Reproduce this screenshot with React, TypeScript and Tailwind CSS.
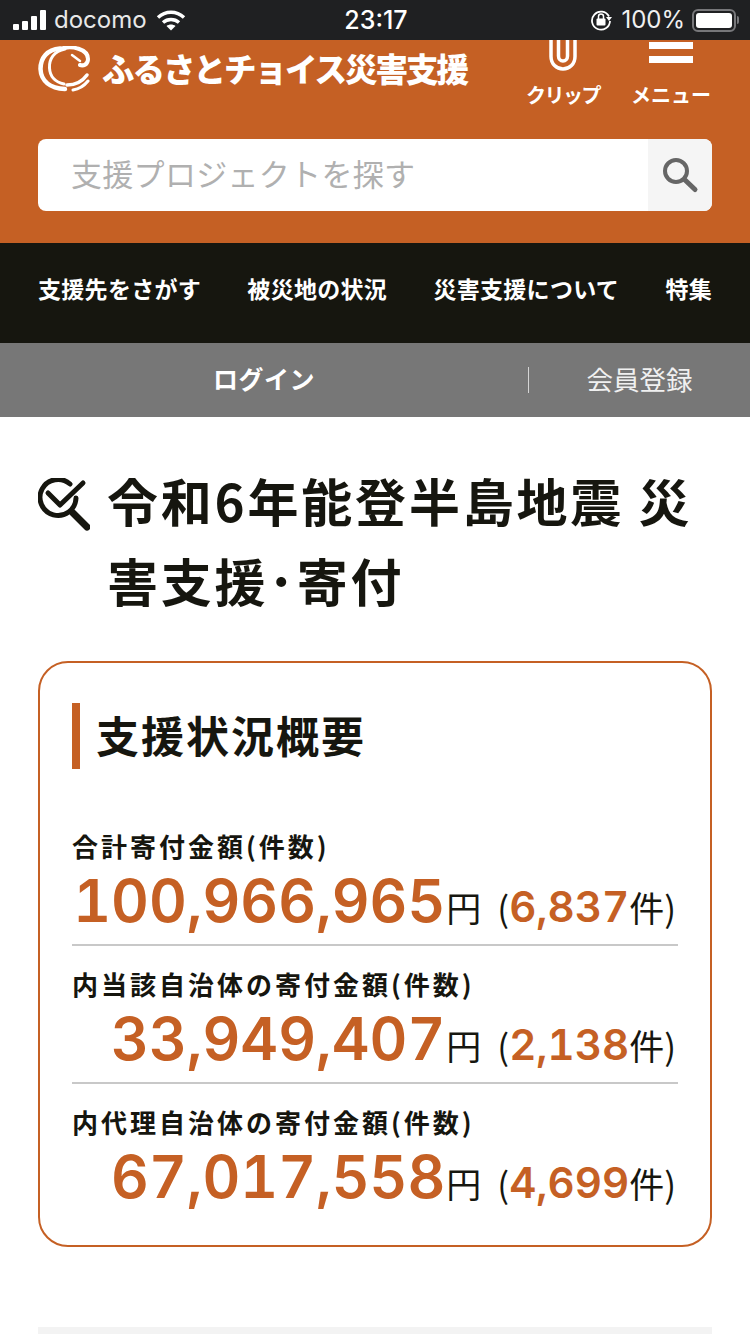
const jp = "font-['Noto_Sans_CJK_JP','Noto_Sans',sans-serif]"

const rows = [
  { label: '合計寄付金額(件数)', amount: '100,966,965', count: '6,837' },
  { label: '内当該自治体の寄付金額(件数)', amount: '33,949,407', count: '2,138' },
  { label: '内代理自治体の寄付金額(件数)', amount: '67,017,558', count: '4,699' },
]

function StatusBar() {
  return (
    <div className="flex h-10 items-center justify-between bg-[#1f2022] pl-[13px] pr-[11px] text-white font-['Inter',sans-serif]">
      <div className="flex w-[260px] items-center">
        <div className="flex items-end gap-[3px]">
          <span className="h-[6px] w-[6px] rounded-[1px] bg-white" />
          <span className="h-[9px] w-[6px] rounded-[1px] bg-white" />
          <span className="h-[14px] w-[6px] rounded-[1px] bg-white" />
          <span className="h-[20px] w-[6px] rounded-[1px] bg-white" />
        </div>
        <span className="ml-[8px] text-[24px] leading-none text-[#e8e8e8]">docomo</span>
        <svg className="ml-[9px]" width="30" height="22" viewBox="0 0 30 22" fill="none" stroke="white" strokeWidth="3.4">
          <path d="M2 8.5C9.5 1.5 20.5 1.5 28 8.5" />
          <path d="M7 13.5C11.5 9.5 18.5 9.5 23 13.5" />
          <path d="M15 21.5L10.5 17C13 15 17 15 19.5 17Z" fill="white" stroke="none" />
        </svg>
      </div>
      <span className="text-[25px] font-medium leading-none">23:17</span>
      <div className="flex w-[260px] items-center justify-end">
        <svg width="22" height="22" viewBox="0 0 22 22" fill="none">
          <path d="M19 7.5A9 9 0 1 0 20 12" stroke="white" strokeWidth="1.8" />
          <path d="M16 8h6l-3 4z" fill="white" />
          <rect x="6.5" y="9.5" width="9" height="7" rx="1" fill="white" />
          <path d="M8.5 10V7.5a2.5 2.5 0 0 1 5 0V10" stroke="white" strokeWidth="1.5" />
        </svg>
        <span className="ml-[9px] text-[24px] leading-none text-[#f0f0f0]">100%</span>
        <div className="ml-[7px] flex items-center">
          <div className="h-[23px] w-[44px] rounded-[6px] border-2 border-[#77777a] p-[2px]">
            <div className="h-full w-full rounded-[3px] bg-white" />
          </div>
          <span className="ml-[1px] h-[8px] w-[2px] rounded-r-sm bg-[#77777a]" />
        </div>
      </div>
    </div>
  )
}

function Logo() {
  return (
    <svg width="52" height="46" viewBox="0 0 52 46" fill="none" stroke="white" strokeLinecap="round">
      <path d="M22 2.5C9 3.5 2.500 12 2.500 23C3 35 12 42 27 43" strokeWidth="4.5" />
      <path d="M27 3C16 5 11 13 11.500 22C12 31 17 36 26 38" strokeWidth="3" />
      <path d="M22 3C34 -1 50 3 50 13C50 19 45 20 42 19" strokeWidth="4" />
      <path d="M34 9L42 15" strokeWidth="2.5" />
      <path d="M49 29C44 36 37 39 29 39" strokeWidth="3.5" />
      <path d="M50 35C46 40 41 43 35 44" strokeWidth="3" />
    </svg>
  )
}

function Header() {
  return (
    <div className="h-[203px] overflow-hidden bg-[#c56024] px-[38px]">
      <div className="flex h-[99px] items-start">
        <div className="mt-[6px]">
          <Logo />
        </div>
        <span className="ml-[12px] mt-[4px] whitespace-nowrap text-[32.5px] font-black leading-[48px] tracking-[-2px] text-white">ふるさとチョイス災害支援</span>
        <div className="ml-auto flex">
          <div className="mr-[12px] flex w-[110px] flex-col items-center text-white">
            <div className="relative h-[31px] w-[40px] overflow-hidden">
              <svg className="absolute left-[6px] top-0" width="28" height="31" viewBox="0 0 28 31" fill="none" stroke="white" strokeWidth="3.5">
                <path d="M2 -4V16.500C2 24 7.500 29 14 29C20.500 29 26 24 26 16.500V-4" />
                <path d="M9.500 -4V16C9.500 19 11.500 21 14 21C16.500 21 18.500 19 18.500 16V-4" />
              </svg>
            </div>
            <span className="mt-[9px] whitespace-nowrap text-[20px] font-bold leading-[30px] tracking-[-1.5px]">クリップ</span>
          </div>
          <div className="flex w-[82px] flex-col items-center text-white">
            <div className="flex h-[31px] flex-col gap-[7px] pt-[2px]">
              <span className="h-[7px] w-[44px] bg-white" />
              <span className="h-[7px] w-[44px] bg-white" />
            </div>
            <span className="mt-[9px] whitespace-nowrap text-[20px] font-bold leading-[30px]">メニュー</span>
          </div>
        </div>
      </div>
      <div className="flex h-[72px] overflow-hidden rounded-[8px] bg-white">
        <div className="flex flex-1 items-center pb-[3px] pl-[33px] text-[31px] tracking-[0.3px] text-[#b0b0b0]">支援プロジェクトを探す</div>
        <div className="flex w-[64px] items-center justify-center bg-[#f5f5f5]">
          <svg width="40" height="40" viewBox="0 0 40 40" fill="none" stroke="#666" strokeLinecap="round">
            <circle cx="16" cy="16" r="11" strokeWidth="4" />
            <path d="M24.500 24.500L35 34.500" strokeWidth="5" />
          </svg>
        </div>
      </div>
    </div>
  )
}

function Nav() {
  return (
    <div className="flex h-[100px] items-center justify-between bg-[#16160f] px-[38px] pb-[10px] text-[23px] font-bold tracking-[0.3px] text-white">
      <span>支援先をさがす</span>
      <span>被災地の状況</span>
      <span>災害支援について</span>
      <span>特集</span>
    </div>
  )
}

function LoginBar() {
  return (
    <div className="flex h-[74px] items-center bg-[#777777] pb-[3px] text-white">
      <div className="w-[528px] text-center text-[25px] font-bold tracking-[0.5px]">ログイン</div>
      <span className="mt-[3px] h-[26px] w-px bg-[#d5d5d5]" />
      <div className="flex-1 text-center text-[26.5px] text-[#f0f0f0]">会員登録</div>
    </div>
  )
}

function Title() {
  return (
    <div className="flex px-[38px] pt-[43px]">
      <svg className="mt-[18px] shrink-0" width="52" height="54" viewBox="0 0 52 54" fill="none" stroke="#16160f" strokeLinecap="round" strokeLinejoin="round">
        <path d="M32 6A18 18 0 1 0 38 20" strokeWidth="5" />
        <path d="M10 15L22 27L45 5" strokeWidth="5" />
        <path d="M35 35L49 49" strokeWidth="7" />
      </svg>
      <h1 className="ml-[17px] text-[51px] font-bold leading-[80px] tracking-[2.8px] text-[#16160f]">
        令和6年能登半島地震 災害支援･寄付
      </h1>
    </div>
  )
}

function Summary() {
  return (
    <div className="mx-[38px] mt-[41px] h-[586px] rounded-[30px] border-2 border-[#c56024] px-[32px] pt-[40px]">
      <div className="flex h-[66px] items-center border-l-[8px] border-[#c56024] pb-[4px] pl-[16px] text-[43px] font-bold tracking-[2px] text-[#16160f]">支援状況概要</div>
      <div className="mt-[39px]">
        {rows.map((row, i) => (
          <div key={row.label} className={i < 2 ? 'h-[138px] border-b-2 border-[#c8c8c8] pt-[19px]' : 'h-[138px] pt-[19px]'}>
            <div className="text-[26px] font-bold leading-[38px] tracking-[3px] text-[#16160f]">{row.label}</div>
            <div className="flex items-baseline justify-end pr-[2px] leading-[72px] text-[#16160f]">
              <span className="font-['Inter',sans-serif] text-[58.5px] font-semibold tabular-nums text-[#c56024]">{row.amount}</span>
              <span className="ml-[1px] text-[35px]">円</span>
              <span className="ml-[16px] text-[35px]">(</span>
              <span className="font-['Inter',sans-serif] text-[42px] font-semibold tabular-nums text-[#c56024]">{row.count}</span>
              <span className="text-[35px]">件)</span>
            </div>
          </div>
        ))}
      </div>
    </div>
  )
}

export default function App() {
  return (
    <div className={`h-[1334px] w-[750px] overflow-hidden bg-white ${jp}`}>
      <StatusBar />
      <Header />
      <Nav />
      <LoginBar />
      <Title />
      <Summary />
      <div className="mx-[38px] mt-[80px] h-[8px] bg-[#f3f3f3]" />
    </div>
  )
}
